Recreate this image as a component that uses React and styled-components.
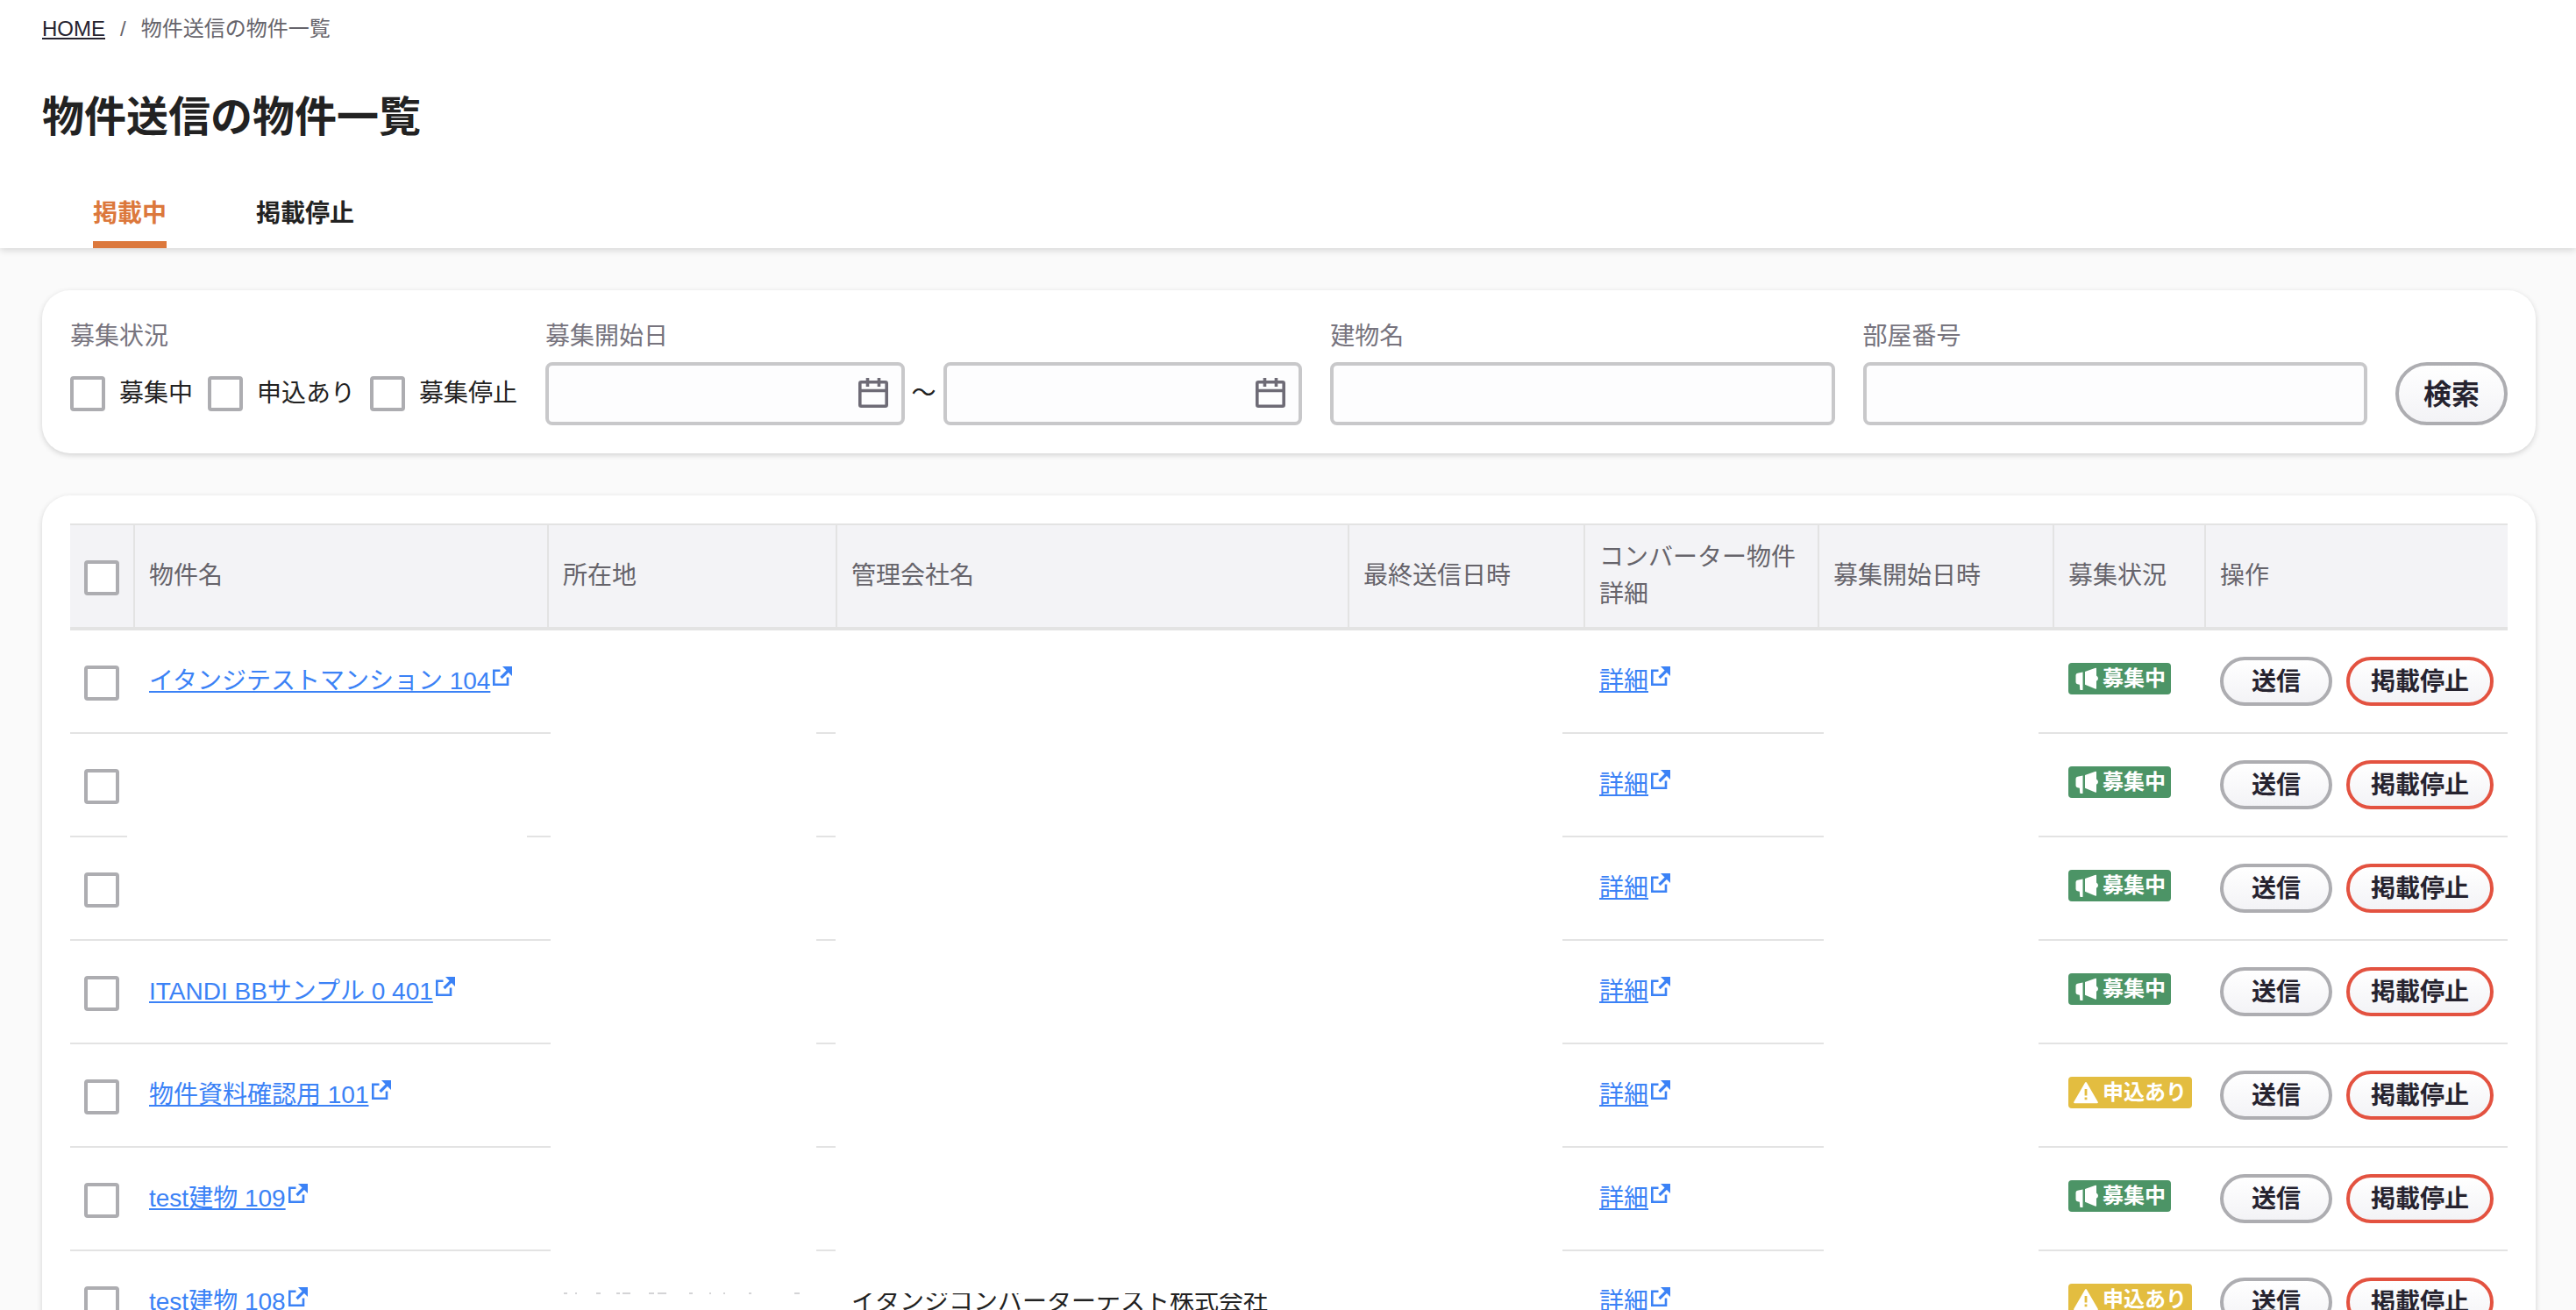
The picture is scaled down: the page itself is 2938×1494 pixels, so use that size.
import styled, { createGlobalStyle } from "styled-components";
import { useState } from "react";

const statusList = ["募集中", "申込あり", "募集停止"];

const rows = [
    {id: 1, name: "イタンジテストマンション 104", status: "open"},
    {id: 2, name: "", status: "open", nameBlank: true},
    {id: 3, name: "", status: "open"},
    {id: 4, name: "ITANDI BBサンプル 0 401", status: "open"},
    {id: 5, name: "物件資料確認用 101", status: "applied"},
    {id: 6, name: "test建物 109", status: "open"},
    {id: 7, name: "test建物 108", status: "applied", company: "イタンジコンバーターテスト株式会社"},
];

const ExternalIcon = () => (
    <IconExternal viewBox="0 0 22 22" aria-hidden="true">
        <path d="M8.5 4.8H1.3V20.7H17V12.5" fill="none" stroke="currentColor" strokeWidth="2.6"/>
        <path d="M9.5 13L18 4.5" stroke="currentColor" strokeWidth="3.2"/>
        <path d="M11 0H22V11Z" fill="currentColor"/>
    </IconExternal>
)

const CalendarIcon = () => (
    <IconCalendar viewBox="0 0 34 34" aria-hidden="true">
        <rect x="1.8" y="4.8" width="30.4" height="27.4" rx="1.5"/>
        <path d="M1.5 14.5H32.5M10.5 0V10M23.5 0V10"/>
    </IconCalendar>
)

const MegaphoneIcon = () => (
    <IconBadge viewBox="0 0 28 28" aria-hidden="true">
        <path d="M2.5 10Q2.5 8.3 4.5 7.8L10.5 6.5V26.5Q10.5 27 10 27H8Q7.3 27 7.2 26.3L6.8 20.8L4.5 20.3Q2.5 20 2.5 18Z"/>
        <path d="M13 6L25 1.7Q26 1.4 26 2.4V10.5Q28 11.8 28 13.7Q28 15.6 26 16.8V25Q26 26 25 25.7L13 20.8Z"/>
    </IconBadge>
)

const WarningIcon = () => (
    <IconBadge viewBox="0 0 28 28" aria-hidden="true">
        <path fillRule="evenodd" d="M13 2.8Q14 1.2 15 2.8L27.6 24.6Q28.4 26.2 26.8 26.2H1.2Q-.4 26.2 .4 24.6ZM12.6 10V17.5H15.4V10ZM12.6 19.5V22.3H15.4V19.5Z"/>
    </IconBadge>
)

const DateInput = ({id, label}) => (
    <DateBox>
        <TextInput id={id} type="text" aria-label={label}/>
        <CalendarIcon/>
    </DateBox>
)

const StatusBadge = ({status}) => (
    <Badge $color={status === "open" ? "#4c9466" : "#e3bd40"}>
        {status === "open" ? <MegaphoneIcon/> : <WarningIcon/>}
        {status === "open" ? "募集中" : "申込あり"}
    </Badge>
)

// 下端だけ残っている住所の文字
const AddressTrace = () => (
    <Trace viewBox="0 0 274 2" aria-hidden="true">
        <path d="M1 1h4M14 1h2M38 1h5M61 1h4M68 1h9M98 1h6M108 1h10M144 1h4M167 1h2M183 1h2M212 1h3M264 1h6"/>
    </Trace>
)

const PropertyRow = ({row, checked, onCheck}) => {
    const blankHeight = row.company ? 48 : null;

    return <tr>
        <CheckCell>
            {row.nameBlank && <Blank $left={65} $right={0}/>}
            <CheckBox checked={checked} onChange={onCheck} aria-label={row.name || "物件"}/>
        </CheckCell>
        <Cell>
            {row.name && <><Link href="#">{row.name}</Link><ExternalIcon/></>}
            {row.nameBlank && <Blank $left={0} $right={23}/>}
        </Cell>
        <Cell>
            {row.company ? <AddressTrace/> : <Blank $left={4} $right={22}/>}
        </Cell>
        <Cell>
            {row.company}
            <Blank $left={0} $right={0} $height={blankHeight}/>
        </Cell>
        <Cell><Blank $left={0} $right={24} $height={blankHeight}/></Cell>
        <Cell><Link href="#">詳細</Link><ExternalIcon/></Cell>
        <Cell><Blank $left={7} $right={16} $height={blankHeight}/></Cell>
        <StatusCell><StatusBadge status={row.status}/></StatusCell>
        <Cell>
            <Actions>
                <PillButton $border="#adadb1">送信</PillButton>
                <PillButton $border="#e35240">掲載停止</PillButton>
            </Actions>
        </Cell>
    </tr>
}

export default function App() {
    const [tab, setTab] = useState("掲載中");
    const [checkedIds, setCheckedIds] = useState([]);

    const toggle = (id) => {
        if (checkedIds.includes(id)) setCheckedIds(checkedIds.filter(v => v !== id));
        else setCheckedIds([...checkedIds, id]);
    }

    const toggleAll = () => {
        setCheckedIds(checkedIds.length === rows.length ? [] : rows.map(r => r.id));
    }

    return <>
        <GlobalStyle/>
        <Page>
            <Header>
                <Breadcrumb>
                    <HomeLink href="#">HOME</HomeLink>
                    <span>/</span>
                    <span>物件送信の物件一覧</span>
                </Breadcrumb>
                <Title>物件送信の物件一覧</Title>
                <Tabs>
                    {["掲載中", "掲載停止"].map(name => (
                        <Tab key={name} $active={tab === name} onClick={() => setTab(name)}>{name}</Tab>
                    ))}
                </Tabs>
            </Header>

            <Main>
                <Card>
                    <SearchForm onSubmit={e => e.preventDefault()}>
                        <Field>
                            <FieldLabel as="span">募集状況</FieldLabel>
                            <FieldBody $gap={17}>
                                {statusList.map(s => (
                                    <CheckLabel key={s}>
                                        <CheckBox/>
                                        {s}
                                    </CheckLabel>
                                ))}
                            </FieldBody>
                        </Field>
                        <Field>
                            <FieldLabel htmlFor="start-from">募集開始日</FieldLabel>
                            <FieldBody $gap={8}>
                                <DateInput id="start-from"/>
                                <span>～</span>
                                <DateInput id="start-to" label="募集開始日"/>
                            </FieldBody>
                        </Field>
                        <Field>
                            <FieldLabel htmlFor="building">建物名</FieldLabel>
                            <TextInput id="building" type="text"/>
                        </Field>
                        <Field>
                            <FieldLabel htmlFor="room">部屋番号</FieldLabel>
                            <TextInput id="room" type="text"/>
                        </Field>
                        <SearchButton type="submit" $border="#adadb1">検索</SearchButton>
                    </SearchForm>
                </Card>

                <Card>
                    <Table>
                        <colgroup>
                            <Col $width={72}/>
                            <Col $width={472}/>
                            <Col $width={329}/>
                            <Col/>
                            <Col $width={269}/>
                            <Col $width={267}/>
                            <Col $width={268}/>
                            <Col $width={173}/>
                            <Col $width={346}/>
                        </colgroup>
                        <thead>
                            <tr>
                                <HeadCheckCell>
                                    <CheckBox
                                        checked={checkedIds.length === rows.length}
                                        onChange={toggleAll}
                                        aria-label="すべて選択"
                                    />
                                </HeadCheckCell>
                                <HeadCell>物件名</HeadCell>
                                <HeadCell>所在地</HeadCell>
                                <HeadCell>管理会社名</HeadCell>
                                <HeadCell>最終送信日時</HeadCell>
                                <HeadCell>コンバーター物件詳細</HeadCell>
                                <HeadCell>募集開始日時</HeadCell>
                                <HeadCell>募集状況</HeadCell>
                                <HeadCell>操作</HeadCell>
                            </tr>
                        </thead>
                        <tbody>
                            {rows.map(row => (
                                <PropertyRow
                                    key={row.id}
                                    row={row}
                                    checked={checkedIds.includes(row.id)}
                                    onCheck={() => toggle(row.id)}
                                />
                            ))}
                        </tbody>
                    </Table>
                </Card>
            </Main>
        </Page>
    </>
}

const GlobalStyle = createGlobalStyle`
  * {
    box-sizing: border-box;
  }
  body {
    margin: 0;
    background: #fafafa;
    color: #222222;
    font-family: "Liberation Sans", "Noto Sans CJK JP", sans-serif;
    font-size: 28px;
    line-height: 42px;
  }
  button, input {
    font-family: inherit;
  }
`

const Page = styled.div`
  height: 100vh;
  overflow: hidden;
`

const Header = styled.header`
  position: relative;
  padding: 9px 48px 0;
  background: #ffffff;
  box-shadow: 0 2px 8px rgba(0, 0, 0, 0.16);
`

const Breadcrumb = styled.nav`
  display: flex;
  gap: 17px;
  color: #66646b;
  font-size: 24px;
  line-height: 48px;
`

const HomeLink = styled.a`
  color: #26232f;
  text-decoration: underline;
  text-decoration-thickness: 2px;
  text-underline-offset: 2px;
`

const Title = styled.h1`
  margin: 41px 0 0;
  font-size: 48px;
  font-weight: bold;
  line-height: 72px;
`

const Tabs = styled.div`
  display: flex;
  gap: 102px;
  margin-top: 53px;
  padding-left: 58px;
`

const Tab = styled.button`
  padding: 0 0 10px;
  background: none;
  border: none;
  border-bottom: 8px solid ${props => props.$active ? "#dc783c" : "transparent"};
  color: ${props => props.$active ? "#dc783c" : "#222222"};
  font-size: 28px;
  font-weight: bold;
  line-height: 42px;
  cursor: pointer;
`

const Main = styled.main`
  display: flex;
  flex-direction: column;
  gap: 48px;
  padding: 48px 46px 48px 48px;
`

const Card = styled.section`
  padding: 32px;
  background: #ffffff;
  border-radius: 32px;
  box-shadow: 0 2px 6px rgba(0, 0, 0, 0.16);
`

const SearchForm = styled.form`
  display: grid;
  grid-template-columns: auto 3fr 2fr 2fr auto;
  align-items: end;
  gap: 32px;
`

const Field = styled.div`
  display: flex;
  flex-direction: column;
  gap: 8px;
  min-width: 0;
`

const FieldLabel = styled.label`
  color: #77747e;
`

const FieldBody = styled.div`
  display: flex;
  align-items: center;
  gap: ${props => props.$gap}px;
  height: 72px;
`

const CheckLabel = styled.label`
  display: flex;
  align-items: center;
  gap: 16px;
  white-space: nowrap;
`

const CheckBox = styled.input.attrs({
    type: "checkbox"
})`
  appearance: none;
  display: block;
  width: 40px;
  height: 40px;
  margin: 0;
  background: #ffffff;
  border: 4px solid #adadb1;
  border-radius: 4px;

  &:checked {
    background: #3b82f6;
  }
`

const TextInput = styled.input`
  width: 100%;
  height: 72px;
  padding: 0 16px;
  background: #fdfdfe;
  border: 4px solid #c8c8ca;
  border-radius: 8px;
  color: #222222;
  font-size: 28px;
`

const DateBox = styled.div`
  position: relative;
  flex: 1;
  min-width: 0;
`

const IconCalendar = styled.svg`
  position: absolute;
  top: 18px;
  right: 19px;
  width: 34px;
  height: 34px;
  fill: none;
  stroke: #6e6b76;
  stroke-width: 3.6;
`

const PillButton = styled.button`
  min-width: 128px;
  height: 56px;
  padding: 0 24px 4px;
  background: linear-gradient(#ffffff, #f3f3f6);
  border: 4px solid ${props => props.$border};
  border-radius: 36px;
  color: #26232f;
  font-size: 28px;
  font-weight: bold;
  white-space: nowrap;
  cursor: pointer;
`

const SearchButton = styled(PillButton)`
  height: 72px;
  font-size: 32px;
`

const Table = styled.table`
  width: 100%;
  table-layout: fixed;
  border-collapse: separate;
  border-spacing: 0;
`

const Col = styled.col`
  width: ${props => props.$width ? `${props.$width}px` : "auto"};
`

const HeadCell = styled.th`
  padding: 16px;
  background: #f3f3f6;
  border-top: 2px solid #e3e3e3;
  border-bottom: 4px solid #e3e3e3;
  border-left: 2px solid #e3e3e3;
  color: #66646b;
  font-weight: normal;
  text-align: left;
`

const HeadCheckCell = styled(HeadCell)`
  padding: 4px 16px 0;
  border-left: none;
`

const Cell = styled.td`
  position: relative;
  height: 118px;
  padding: 0 16px 0 18px;
  border-bottom: 2px solid #e3e3e3;
  white-space: nowrap;
`

const CheckCell = styled(Cell)`
  padding: 4px 16px 0;
`

const StatusCell = styled(Cell)`
  padding: 0 0 6px 18px;
`

const Blank = styled.span`
  position: absolute;
  top: 0;
  left: ${props => props.$left}px;
  right: ${props => props.$right}px;
  height: ${props => props.$height ? `${props.$height}px` : "118px"};
  background: #ffffff;
`

const Trace = styled.svg`
  position: absolute;
  top: 47px;
  left: 18px;
  width: 274px;
  height: 2px;
  stroke: #d4d4d6;
  stroke-width: 2;
`

const Link = styled.a`
  color: #3b82f6;
  text-decoration: underline;
  text-decoration-thickness: 2px;
  text-underline-offset: 2px;
`

const IconExternal = styled.svg`
  width: 22px;
  height: 22px;
  margin-left: 3px;
  color: #3b82f6;
  vertical-align: 4px;
`

const Badge = styled.span`
  display: flex;
  align-items: center;
  width: fit-content;
  height: 36px;
  padding: 0 6px;
  background: ${props => props.$color};
  border-radius: 4px;
  color: #ffffff;
  font-size: 24px;
  font-weight: bold;
  line-height: 34px;
`

const IconBadge = styled.svg`
  width: 28px;
  height: 28px;
  margin-right: 5px;
  fill: #ffffff;
`

const Actions = styled.div`
  display: flex;
  gap: 16px;
`
